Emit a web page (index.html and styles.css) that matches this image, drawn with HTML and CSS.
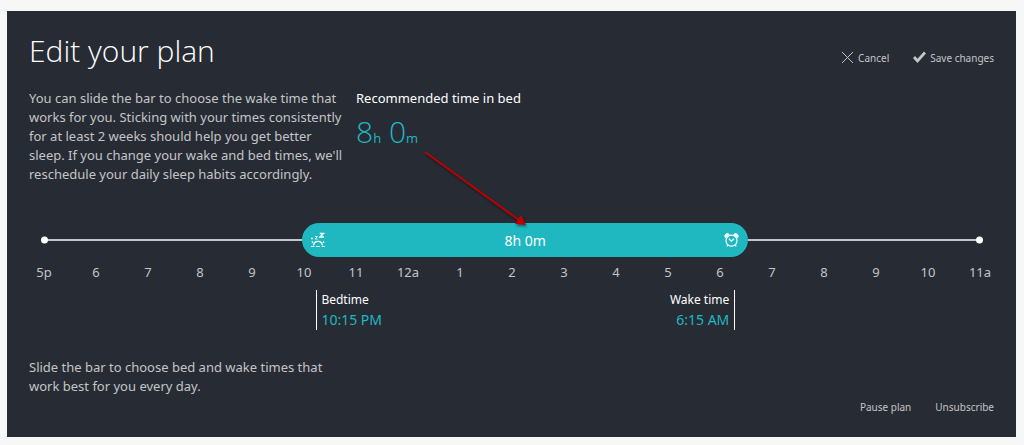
FILE: index.html
```html
<!DOCTYPE html>
<html lang="en">
<head>
<meta charset="utf-8">
<meta name="viewport" content="width=device-width, initial-scale=1">
<title>Edit your plan</title>
<link rel="stylesheet" href="styles.css">
</head>
<body>
<main class="panel">
  <header class="panel-header">
    <h1 class="title">Edit your plan</h1>
    <div class="actions">
      <button class="action" type="button">
        <svg class="action-icon" viewBox="0 0 13 13" aria-hidden="true"><path d="M1 1 12 12M12 1 1 12" fill="none" stroke="currentColor" stroke-width="1"/></svg>
        Cancel
      </button>
      <button class="action" type="button">
        <svg class="action-icon" viewBox="0 0 13 13" aria-hidden="true"><path d="M1 6 4.500 10 12 1.500" fill="none" stroke="currentColor" stroke-width="2.8"/></svg>
        Save changes
      </button>
    </div>
  </header>

  <section class="intro">
    <p class="copy">You can slide the bar to choose the wake time that works for you. Sticking with your times consistently for at least 2 weeks should help you get better sleep. If you change your wake and bed times, we'll reschedule your daily sleep habits accordingly.</p>
    <div class="recommended">
      <h2 class="recommended-label">Recommended time in bed</h2>
      <p class="duration">8<span class="unit">h</span> 0<span class="unit">m</span></p>
    </div>
  </section>

  <section class="timeline">
    <div class="track">
      <div class="bar">
        <svg class="bar-icon" viewBox="0 0 16 16" aria-hidden="true">
          <g fill="none" stroke="currentColor">
            <path d="M3.500 13.500C4.200 8 11.800 8 12.500 13.500" stroke-width="1.400"/>
            <path d="M1.200 14.500H4.500M6.300 14.500H9.700M11.500 14.500H14.800M1.800 9.500 3.200 10.700M14.200 9.500 12.800 10.700" stroke-width="1.200"/>
            <path d="M1.200 6.500H2.800" stroke-width="1.500"/>
            <path d="M5 4.500H7.300L5.200 7H7.500" stroke-width="1"/>
            <path d="M9.800 1.500H13.500L10 5H14" stroke-width="1.400"/>
          </g>
        </svg>
        <output class="bar-value" for="wake">8h 0m</output>
        <svg class="bar-icon" viewBox="0 0 16 16" aria-hidden="true">
          <g fill="none" stroke="currentColor" stroke-width="1.2">
            <circle cx="7.500" cy="8.700" r="5.500"/>
            <path d="M4.800 6.800 7.300 9.200 10 6.800M3.800 12.800 2.800 14.300M11.200 12.800 12.200 14.300"/>
          </g>
          <path d="M1.500 5.800A2.500 2.500 0 0 1 5.300 2.500ZM13.500 5.800A2.500 2.500 0 0 0 9.700 2.500Z" fill="currentColor" stroke="currentColor"/>
        </svg>
      </div>
      <input class="slider" id="wake" type="range" min="0" max="18" step="0.25" value="9" aria-label="Wake time">
    </div>
    <ol class="hours">
      <li>5p</li><li>6</li><li>7</li><li>8</li><li>9</li><li>10</li><li>11</li><li>12a</li><li>1</li><li>2</li><li>3</li><li>4</li><li>5</li><li>6</li><li>7</li><li>8</li><li>9</li><li>10</li><li>11a</li>
    </ol>
    <div class="markers">
      <div class="marker marker-bed"><span class="marker-label">Bedtime</span><span class="marker-time">10:15 PM</span></div>
      <div class="marker marker-wake"><span class="marker-label">Wake time</span><span class="marker-time">6:15 AM</span></div>
    </div>
  </section>

  <footer class="panel-footer">
    <p class="copy">Slide the bar to choose bed and wake times that work best for you every day.</p>
    <div class="plan-actions">
      <button class="action" type="button">Pause plan</button>
      <button class="action" type="button">Unsubscribe</button>
    </div>
  </footer>

  <svg class="arrow" viewBox="0 0 108 84" aria-hidden="true">
    <path d="M2 3 96 71" stroke="#bd0000" stroke-width="2"/>
    <path d="M103 76 92 75 98 66Z" fill="#bd0000"/>
  </svg>
</main>
</body>
</html>
```
FILE: styles.css
```css
* { box-sizing: border-box; }

body {
  margin: 0;
  padding: 11px 8px 8px 7px;
  background: #f7f7f7;
  font-family: "Noto Sans", "Open Sans", sans-serif;
  font-size: 13px;
  line-height: 19px;
  color: #c4c5c7;
}

h1, h2, p, ol { margin: 0; padding: 0; font-weight: 400; }

.panel {
  position: relative;
  background: #272b34;
  padding: 20px 22px;
}

.panel-header {
  display: flex;
  justify-content: space-between;
  align-items: center;
  height: 40px;
}

.title {
  font-family: "Open Sans", sans-serif;
  font-weight: 300;
  font-size: 30px;
  line-height: 40px;
  color: #fff;
}

.actions, .plan-actions { display: flex; gap: 24px; }
.actions { padding-top: 13px; }

.action {
  display: flex;
  align-items: center;
  gap: 4px;
  border: 0;
  padding: 0;
  background: none;
  color: inherit;
  font: inherit;
  font-size: 10px;
  line-height: 16px;
  cursor: pointer;
}

.action-icon { width: 13px; height: 13px; }

.intro { display: flex; gap: 12px; margin-top: 18px; }
.copy { width: 315px; }

.recommended-label { font-size: 13px; line-height: 19px; color: #fff; }

.duration {
  font-family: "Open Sans", sans-serif;
  font-weight: 300;
  font-size: 30px;
  line-height: 40px;
  margin-top: 4px;
  color: #1fb8c0;
}

.unit { font-size: 13px; font-weight: 400; }

.timeline { margin: 39px -12px 0 -11px; }

.track {
  position: relative;
  margin: 0 calc(100% / 38);
  background: linear-gradient(#c4c5c7, #c4c5c7) center / 100% 2px no-repeat;
}

.track::before, .track::after {
  content: "";
  position: absolute;
  top: 50%;
  width: 7px;
  height: 7px;
  border-radius: 50%;
  background: #fff;
  transform: translateY(-50%);
}

.track::before { left: -3px; }
.track::after { right: -3px; }

.bar {
  display: flex;
  align-items: center;
  justify-content: space-between;
  width: 47.6%;
  height: 34px;
  margin-left: 27.6%;
  padding: 0 8px;
  border-radius: 17px;
  background: #1fb8c0;
  color: #fff;
}

.bar-icon { width: 16px; height: 16px; }
.bar-value { font-size: 14px; }

.slider {
  position: absolute;
  inset: 0;
  width: 100%;
  height: 100%;
  margin: 0;
  opacity: 0;
  cursor: pointer;
}

.hours {
  display: grid;
  grid-template-columns: repeat(19, 1fr);
  margin-top: 6px;
  list-style: none;
  text-align: center;
}

.markers {
  display: flex;
  justify-content: space-between;
  width: 42.4%;
  margin: 8px 0 0 30.2%;
}

.marker { display: flex; flex-direction: column; line-height: 20px; }
.marker-bed { padding-left: 4px; border-left: 1px solid #fff; }
.marker-wake { padding-right: 5px; border-right: 1px solid #fff; text-align: right; }
.marker-label { font-size: 12px; color: #fff; }
.marker-time { font-size: 14px; color: #1fb8c0; }

.panel-footer {
  display: flex;
  justify-content: space-between;
  align-items: flex-end;
  margin-top: 28px;
}

.panel-footer .copy { padding-bottom: 21px; }

.plan-actions { padding-bottom: 2px; }

.arrow {
  position: absolute;
  left: 416px;
  top: 138px;
  width: 108px;
  height: 84px;
  filter: drop-shadow(1px 2px 1px rgb(0 0 0 / 40%));
  pointer-events: none;
}
```
